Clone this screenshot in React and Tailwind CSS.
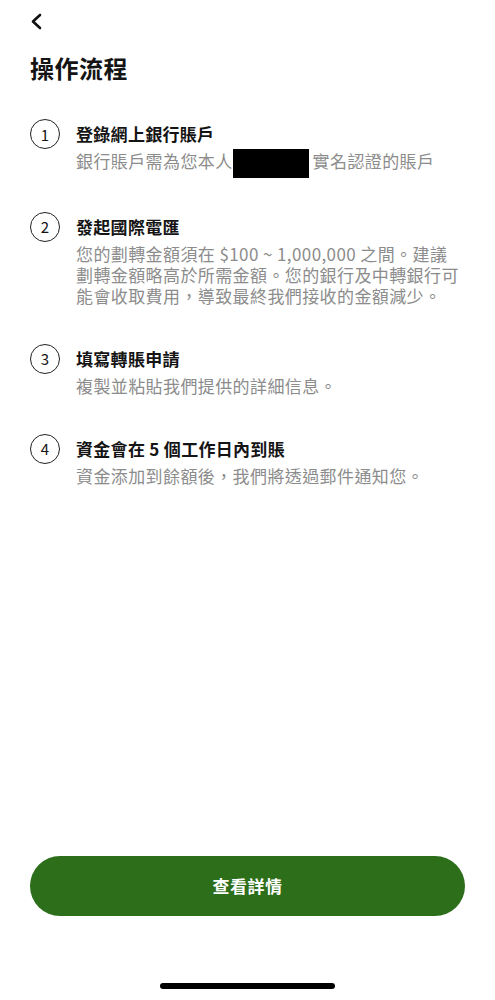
const steps = [
  {
    n: 1,
    title: "登錄網上銀行賬戶",
    body: (
      <>
        銀行賬戶需為您本人
        <span className="inline-block w-[76px] h-[29px] -my-[4px] bg-black align-middle mr-[4px]"></span>
        實名認證的賬戶
      </>
    ),
  },
  {
    n: 2,
    title: "發起國際電匯",
    body: (
      <>
        您的劃轉金額須在 $100 ~ 1,000,000 之間。建議
        <br />
        劃轉金額略高於所需金額。您的銀行及中轉銀行可
        <br />
        能會收取費用，導致最終我們接收的金額減少。
      </>
    ),
  },
  { n: 3, title: "填寫轉賬申請", body: "複製並粘貼我們提供的詳細信息。" },
  { n: 4, title: "資金會在 5 個工作日內到賬", body: "資金添加到餘額後，我們將透過郵件通知您。" },
];

const App = () => {
  return (
    <div
      className="h-[1000px] w-full bg-white flex flex-col px-[30px] text-[#141414]"
      style={{ fontFamily: '"Noto Sans CJK TC", "Noto Sans", sans-serif' }}
    >
      {/* Back */}
      <div className="pt-[13px] h-[30px]">
        <svg width="14" height="17" viewBox="0 0 14 17" fill="none">
          <path d="M10 2 L3 8.5 L10 15" stroke="#111" strokeWidth="2.6" strokeLinecap="round" strokeLinejoin="round" />
        </svg>
      </div>

      {/* Title */}
      <h1 className="mt-[22px] text-[24px] leading-[32px] font-bold tracking-[0.5px]">操作流程</h1>

      {/* Steps */}
      <div className="mt-[38px] flex flex-col gap-[41px]">
        {steps.map((s) => (
          <div key={s.n} className="flex gap-[16px]">
            <div className="w-[30px] h-[30px] -mt-[3px] shrink-0 rounded-full border-[1.5px] border-[#222] flex items-center justify-center text-[15px] leading-none">
              {s.n}
            </div>
            <div className="flex-1">
              <div className="text-[17px] leading-[24px] font-bold tracking-[0.3px]">{s.title}</div>
              <p className="mt-[4px] text-[17px] leading-[21px] text-[#8c8c8c] tracking-[0.4px] whitespace-nowrap">{s.body}</p>
            </div>
          </div>
        ))}
      </div>

      <div className="flex-1"></div>

      {/* Button */}
      <button className="h-[60px] w-full rounded-full bg-[#2d6e1b] text-white text-[17px] font-bold tracking-[0.5px]">
        查看詳情
      </button>

      {/* Home indicator */}
      <div className="mt-[67px] mb-[11px] flex justify-center">
        <div className="w-[175px] h-[6px] rounded-full bg-black"></div>
      </div>
    </div>
  );
};

export default App;
